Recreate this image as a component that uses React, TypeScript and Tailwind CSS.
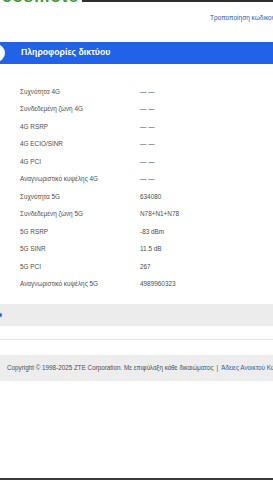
const rows: [string, string][] = [
  ["Συχνότητα 4G", "— —"],
  ["Συνδεδεμένη ζώνη 4G", "— —"],
  ["4G RSRP", "— —"],
  ["4G ECIO/SINR", "— —"],
  ["4G PCI", "— —"],
  ["Αναγνωριστικό κυψέλης 4G", "— —"],
  ["Συχνότητα 5G", "634080"],
  ["Συνδεδεμένη ζώνη 5G", "N78+N1+N78"],
  ["5G RSRP", "-83 dBm"],
  ["5G SINR", "11.5 dB"],
  ["5G PCI", "267"],
  ["Αναγνωριστικό κυψέλης 5G", "4989960323"],
];

export default function App() {
  return (
    <div className="flex h-[480px] w-full flex-col overflow-hidden bg-white font-['Liberation_Sans',Arial,sans-serif] text-[#4d4d4d]">
      {/* header, cut off at the top */}
      <div className="flex h-[42px] flex-col">
        <div className="flex h-[4px] items-start">
          <div className="h-[4px] w-[82px] overflow-hidden">
            <span className="-mt-[11px] block pl-[2px] text-[17px] font-bold leading-[15px] tracking-[1px] text-[#3b9a3c]">
              cosmote
            </span>
          </div>
          <div className="h-[2px] flex-1 bg-[#2f2f2f]" />
        </div>
        <div className="mt-[10px] whitespace-nowrap pl-[210px] text-[6.5px] leading-[8px] text-[#2a5caa]">
          Τροποποίηση κωδικού πρόσβασης
        </div>
      </div>

      <div className="flex h-[22px] shrink-0 items-center bg-[#2162e8]">
        <span className="-ml-[13px] h-[18px] w-[18px] shrink-0 rounded-full bg-white" />
        <span className="ml-[16px] whitespace-nowrap text-[8.7px] font-bold text-white">
          Πληροφορίες δικτύου
        </span>
      </div>

      <div className="flex flex-col pt-[19px]">
        {rows.map(([label, value]) => (
          <div key={label} className="flex h-[17.5px] items-center whitespace-nowrap text-[6.4px]">
            <span className="w-[140px] pl-[20px]">{label}</span>
            <span>{value}</span>
          </div>
        ))}
      </div>

      <div className="mt-[11px] flex h-[22px] shrink-0 items-center bg-[#ececec]">
        <span className="-ml-[2px] h-[4px] w-[4px] rounded-full bg-[#2162e8]" />
      </div>

      <div className="mt-[13px] h-px shrink-0 bg-[#e6e6e6]" />

      <div className="mt-[15px] flex h-[26px] shrink-0 items-center whitespace-nowrap bg-[#ededed] pl-[7px] text-[6.3px] text-[#4d4d4d]">
        <span>Copyright © 1998-2025 ZTE Corporation. Με επιφύλαξη κάθε δικαιώματος</span>
        <span className="mx-[3px]">|</span>
        <span className="text-[#2a5caa]">Άδειες Ανοικτού Κώδικα</span>
      </div>

      <div className="flex-1" />
      <div className="h-[2px] shrink-0 bg-[#3a3a3a]" />
    </div>
  );
}
